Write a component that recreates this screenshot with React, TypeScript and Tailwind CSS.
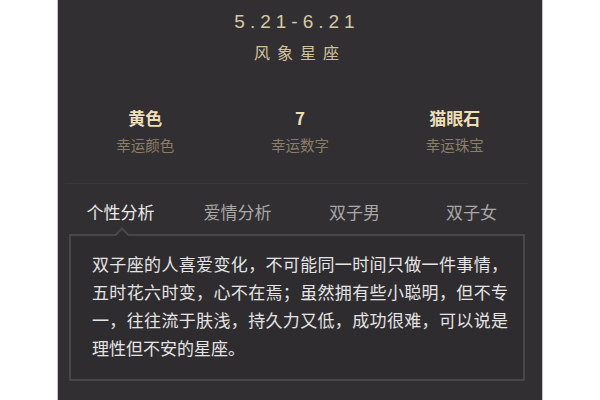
const LUCKY = [
  { value: '黄色', label: '幸运颜色' },
  { value: '7', label: '幸运数字' },
  { value: '猫眼石', label: '幸运珠宝' },
];

const TABS = ['个性分析', '爱情分析', '双子男', '双子女'];

const cjk = { fontFamily: '"Noto Sans CJK SC", "Noto Sans", sans-serif' };

export default function App() {
  const active = 0;

  return (
    <div className="w-[600px] h-[400px] bg-white flex justify-center overflow-hidden" style={cjk}>
      <div className="w-[486px] h-full border-x border-[#c4c4c4] bg-[#322f32] flex flex-col">
        {/* Date + element */}
        <p
          className="pt-[10px] pr-[6px] text-center text-[19px] leading-[24px] tracking-[5px] text-[#d4c9a3]"
          style={{ fontFamily: '"Liberation Sans", Arial, sans-serif' }}
        >
          5.21-6.21
        </p>
        <p className="mt-[6px] text-center text-[16px] leading-[24px] tracking-[7px] text-[#cdc29c]">
          风象星座
        </p>

        {/* Lucky items */}
        <div className="mt-[43px] px-[10px] grid grid-cols-3">
          {LUCKY.map((item) => (
            <div key={item.label} className="flex flex-col items-center">
              <p className="text-[17px] leading-[22px] font-bold text-[#ecdfb6]">{item.value}</p>
              <p className="mt-[6px] text-[14.5px] leading-[20px] text-[#8a7f66]">{item.label}</p>
            </div>
          ))}
        </div>

        <div className="mt-[28px] ml-[7px] mr-[14px] h-px bg-[#3a373a]" />

        {/* Tabs */}
        <div className="mt-[16px] ml-[4px] mr-[12px] grid grid-cols-4">
          {TABS.map((tab, i) => (
            <p
              key={tab}
              className={`text-center text-[17px] leading-[24px] ${
                i === active ? 'text-[#e8e8e8]' : 'text-[#a9a8a9]'
              }`}
            >
              {tab}
            </p>
          ))}
        </div>

        {/* Content box */}
        <div className="relative mt-[10px] ml-[11px] w-[456px] border-2 border-[#4a474b] bg-[#2f2c2f] pt-[14px] pb-[17px] pl-[21px]">
          <svg className="absolute left-[44px] top-[-9px]" width="14" height="9" viewBox="0 0 14 9">
            <polygon points="0,9 7,1.5 14,9" fill="#2f2c2f" />
            <polyline points="0,8.5 7,1.5 14,8.5" fill="none" stroke="#4a474b" strokeWidth="2" />
          </svg>
          <p className="w-[416px] text-[17px] leading-[28px] text-justify text-[#e4e4e4]">
            双子座的人喜爱变化，不可能同一时间只做一件事情，五时花六时变，心不在焉；虽然拥有些小聪明，但不专一，往往流于肤浅，持久力又低，成功很难，可以说是理性但不安的星座。
          </p>
        </div>
      </div>
    </div>
  );
}
